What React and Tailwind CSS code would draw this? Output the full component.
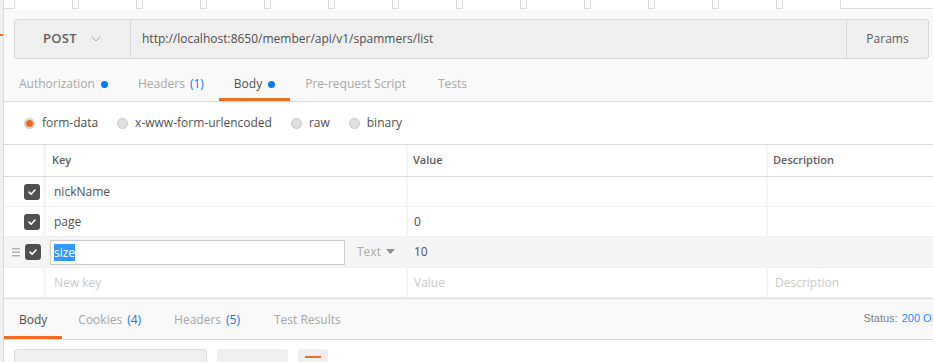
import { ChevronDown } from 'lucide-react'

const FONT = { fontFamily: '"Open Sans", "Liberation Sans", sans-serif' }

const TOP_TABS = [0, 1, 2, 3, 4, 5, 6, 7, 8, 9, 10, 11, 12]

function Check() {
  return (
    <span className="flex h-4 w-4 items-center justify-center rounded-[3px] bg-[#505050]">
      <svg width="10" height="10" viewBox="0 0 10 10" fill="none">
        <path d="M2 5.2 L4.1 7.2 L8 3" stroke="white" strokeWidth="1.6" strokeLinecap="round" strokeLinejoin="round" />
      </svg>
    </span>
  )
}

function Radio({ on, label }) {
  return (
    <label className="mr-[19px] flex items-center gap-[7px] text-[12px] text-[#505050]">
      <span className="flex h-[11px] w-[11px] items-center justify-center rounded-full border border-[#c8c8c8] bg-[#e0e0e0]">
        {on && <span className="h-[7px] w-[7px] rounded-full bg-[#f26b22]" />}
      </span>
      {label}
    </label>
  )
}

function Row({ k, v, placeholder, children }) {
  const tone = placeholder ? 'text-[#cccccc]' : 'text-[#505050]'
  return (
    <div className="flex h-[30px] shrink-0 border-b border-[#f0f0f0] bg-white">
      <div className="flex w-[39px] items-center justify-end pr-[3px]">{children}</div>
      <div className={`flex w-[363px] items-center border-l-[3px] border-[#f5f5f5] pl-[8px] text-[12px] ${tone}`}>{k}</div>
      <div className={`flex w-[360px] items-center border-l-[2px] border-[#f5f5f5] pl-[6px] text-[12px] ${tone}`}>{v}</div>
      <div className="flex flex-1 items-center border-l-[2px] border-[#f5f5f5] pl-[7px] text-[12px] text-[#cccccc]">
        {placeholder ? 'Description' : ''}
      </div>
    </div>
  )
}

export default function App() {
  return (
    <div className="flex h-[362px] w-[933px] overflow-hidden bg-white" style={FONT}>
      <div className="relative w-[4px] shrink-0 border-r border-[#dcdcdc] bg-[#f0f0f0]">
        <span className="absolute left-0 top-[34px] h-[2px] w-[3px] bg-[#f26b22]" />
      </div>

      <div className="flex min-w-0 flex-1 flex-col">
        {/* tab strip */}
        <div className="flex h-[9px] shrink-0 border-b border-[#dcdcdc] bg-white pl-[10px]">
          {TOP_TABS.map(i => (
            <div
              key={i}
              className={`mr-[5px] w-[59px] shrink-0 border-x border-[#dcdcdc] bg-white ${i === 5 ? '-mb-px h-[10px]' : 'h-[9px]'}`}
            />
          ))}
        </div>

        {/* request bar */}
        <div className="shrink-0 bg-[#f9f9f9] pb-[9px] pt-[10px]">
          <div className="ml-[10px] mr-[4px] flex h-[40px] rounded-[3px] border border-[#d9d9d9] bg-[#efefef]">
            <div className="flex w-[116px] items-center justify-center gap-[11px] border-r border-[#d9d9d9] pl-[2px] text-[13px] text-[#606060]">
              <span className="font-semibold tracking-[0.3px]">POST</span>
              <ChevronDown size={16} strokeWidth={1.5} className="text-[#a8a8a8]" />
            </div>
            <div className="flex flex-1 items-center pl-[11px] text-[12px] text-[#505050]">
              http://localhost:8650/member/api/v1/spammers/list
            </div>
            <div className="flex w-[82px] items-center justify-center border-l border-[#d9d9d9] text-[12px] text-[#606060]">
              Params
            </div>
          </div>
        </div>

        {/* request tabs */}
        <div className="flex h-[34px] shrink-0 border-b border-[#dcdcdc] bg-[#f9f9f9] pt-[2px] text-[12px] text-[#a8a8a8]">
          <div className="flex items-center gap-[6px] border-b-[3px] border-transparent px-[15px]">
            Authorization <span className="h-[7px] w-[7px] rounded-full bg-[#097bed]" />
          </div>
          <div className="flex items-center gap-[5px] border-b-[3px] border-transparent px-[15px]">
            Headers <span className="text-[#097bed]">(1)</span>
          </div>
          <div className="flex items-center gap-[6px] border-b-[3px] border-[#f26b22] px-[15px] text-[#505050]">
            Body <span className="h-[7px] w-[7px] rounded-full bg-[#097bed]" />
          </div>
          <div className="flex items-center border-b-[3px] border-transparent px-[15px]">Pre-request Script</div>
          <div className="flex items-center border-b-[3px] border-transparent px-[17px]">Tests</div>
        </div>

        {/* body type */}
        <div className="flex h-[43px] shrink-0 items-center border-b border-[#dcdcdc] bg-white pl-[20px]">
          <Radio on label="form-data" />
          <Radio label="x-www-form-urlencoded" />
          <Radio label="raw" />
          <Radio label="binary" />
        </div>

        {/* header */}
        <div className="flex h-[32px] shrink-0 border-b border-[#dcdcdc] bg-white text-[11px] font-semibold text-[#606060]">
          <div className="w-[39px]" />
          <div className="flex w-[363px] items-center border-l-[3px] border-[#f5f5f5] pl-[6px]">Key</div>
          <div className="flex w-[360px] items-center border-l-[2px] border-[#f5f5f5] pl-[5px]">Value</div>
          <div className="flex flex-1 items-center border-l-[2px] border-[#f5f5f5] pl-[5px]">Description</div>
        </div>

        <Row k="nickName" v="">
          <Check />
        </Row>
        <Row k="page" v="0">
          <Check />
        </Row>
        <div className="flex h-[31px] shrink-0 border-b border-[#f0f0f0] bg-[#f5f5f5]">
          <div className="flex w-[39px] items-center">
            <svg width="9" height="10" viewBox="0 0 9 10" className="ml-[8px] mr-[4px]">
              <rect x="0" y="1" width="8" height="1.4" fill="#b0b0b0" />
              <rect x="0" y="4.5" width="8" height="1.4" fill="#b0b0b0" />
              <rect x="0" y="8" width="8" height="1.4" fill="#b0b0b0" />
            </svg>
            <Check />
          </div>
          <div className="flex w-[363px] items-center pl-[7px]">
            <div className="flex h-[25px] w-[295px] items-center border border-[#cccccc] bg-white pl-[3px] text-[12px]">
              <span className="bg-[#3399ff] leading-[17px] text-white">size</span>
            </div>
            <span className="ml-[12px] flex items-center gap-[5px] text-[12px] text-[#aaaaaa]">
              Text
              <svg width="9" height="6" viewBox="0 0 9 6"><path d="M0 0 L9 0 L4.5 5 Z" fill="#909090" /></svg>
            </span>
          </div>
          <div className="flex w-[360px] items-center pl-[8px] text-[12px] text-[#505050]">10</div>
          <div className="flex-1" />
        </div>
        <Row k="New key" v="Value" placeholder />

        {/* response */}
        <div className="flex h-[42px] shrink-0 border-b border-t border-[#dcdcdc] bg-[#f9f9f9] pt-[5px] text-[12px] text-[#a8a8a8]">
          <div className="flex items-center border-b-[3px] border-[#f26b22] px-[15px] text-[#505050]">Body</div>
          <div className="flex items-center gap-[5px] border-b-[3px] border-transparent px-[16px]">
            Cookies <span className="text-[#097bed]">(4)</span>
          </div>
          <div className="flex items-center gap-[5px] border-b-[3px] border-transparent px-[17px]">
            Headers <span className="text-[#097bed]">(5)</span>
          </div>
          <div className="flex items-center border-b-[3px] border-transparent px-[17px]">Test Results</div>
          <div
            className="-mr-[6px] ml-auto flex items-start whitespace-nowrap pt-[6px] text-[11px] text-[#808080]"
            style={{ fontFamily: '"Liberation Sans", Arial, sans-serif' }}
          >
            Status:<span className="ml-[4px] text-[#1a8cff]">200 OK</span>
          </div>
        </div>

        <div className="flex shrink-0 gap-[10px] bg-white pl-[10px] pt-[9px] text-[12px] text-[#505050]">
          <div className="flex h-[36px] w-[193px] shrink-0 items-start justify-around rounded-[3px] border border-[#dcdcdc] bg-[#efefef] px-[10px] pt-[8px]">
            <span>Pretty</span>
            <span className="text-[#909090]">Raw</span>
            <span className="text-[#909090]">Preview</span>
          </div>
          <div className="flex h-[36px] w-[71px] shrink-0 items-start justify-center gap-[6px] rounded-[3px] bg-[#efefef] pt-[9px]">
            JSON <ChevronDown size={12} className="mt-[3px]" />
          </div>
          <div className="flex h-[36px] w-[30px] shrink-0 justify-center rounded-[3px] bg-[#efefef] pt-[7px]">
            <span className="h-[2px] w-[16px] bg-[#f26b22]" />
          </div>
        </div>
      </div>
    </div>
  )
}
